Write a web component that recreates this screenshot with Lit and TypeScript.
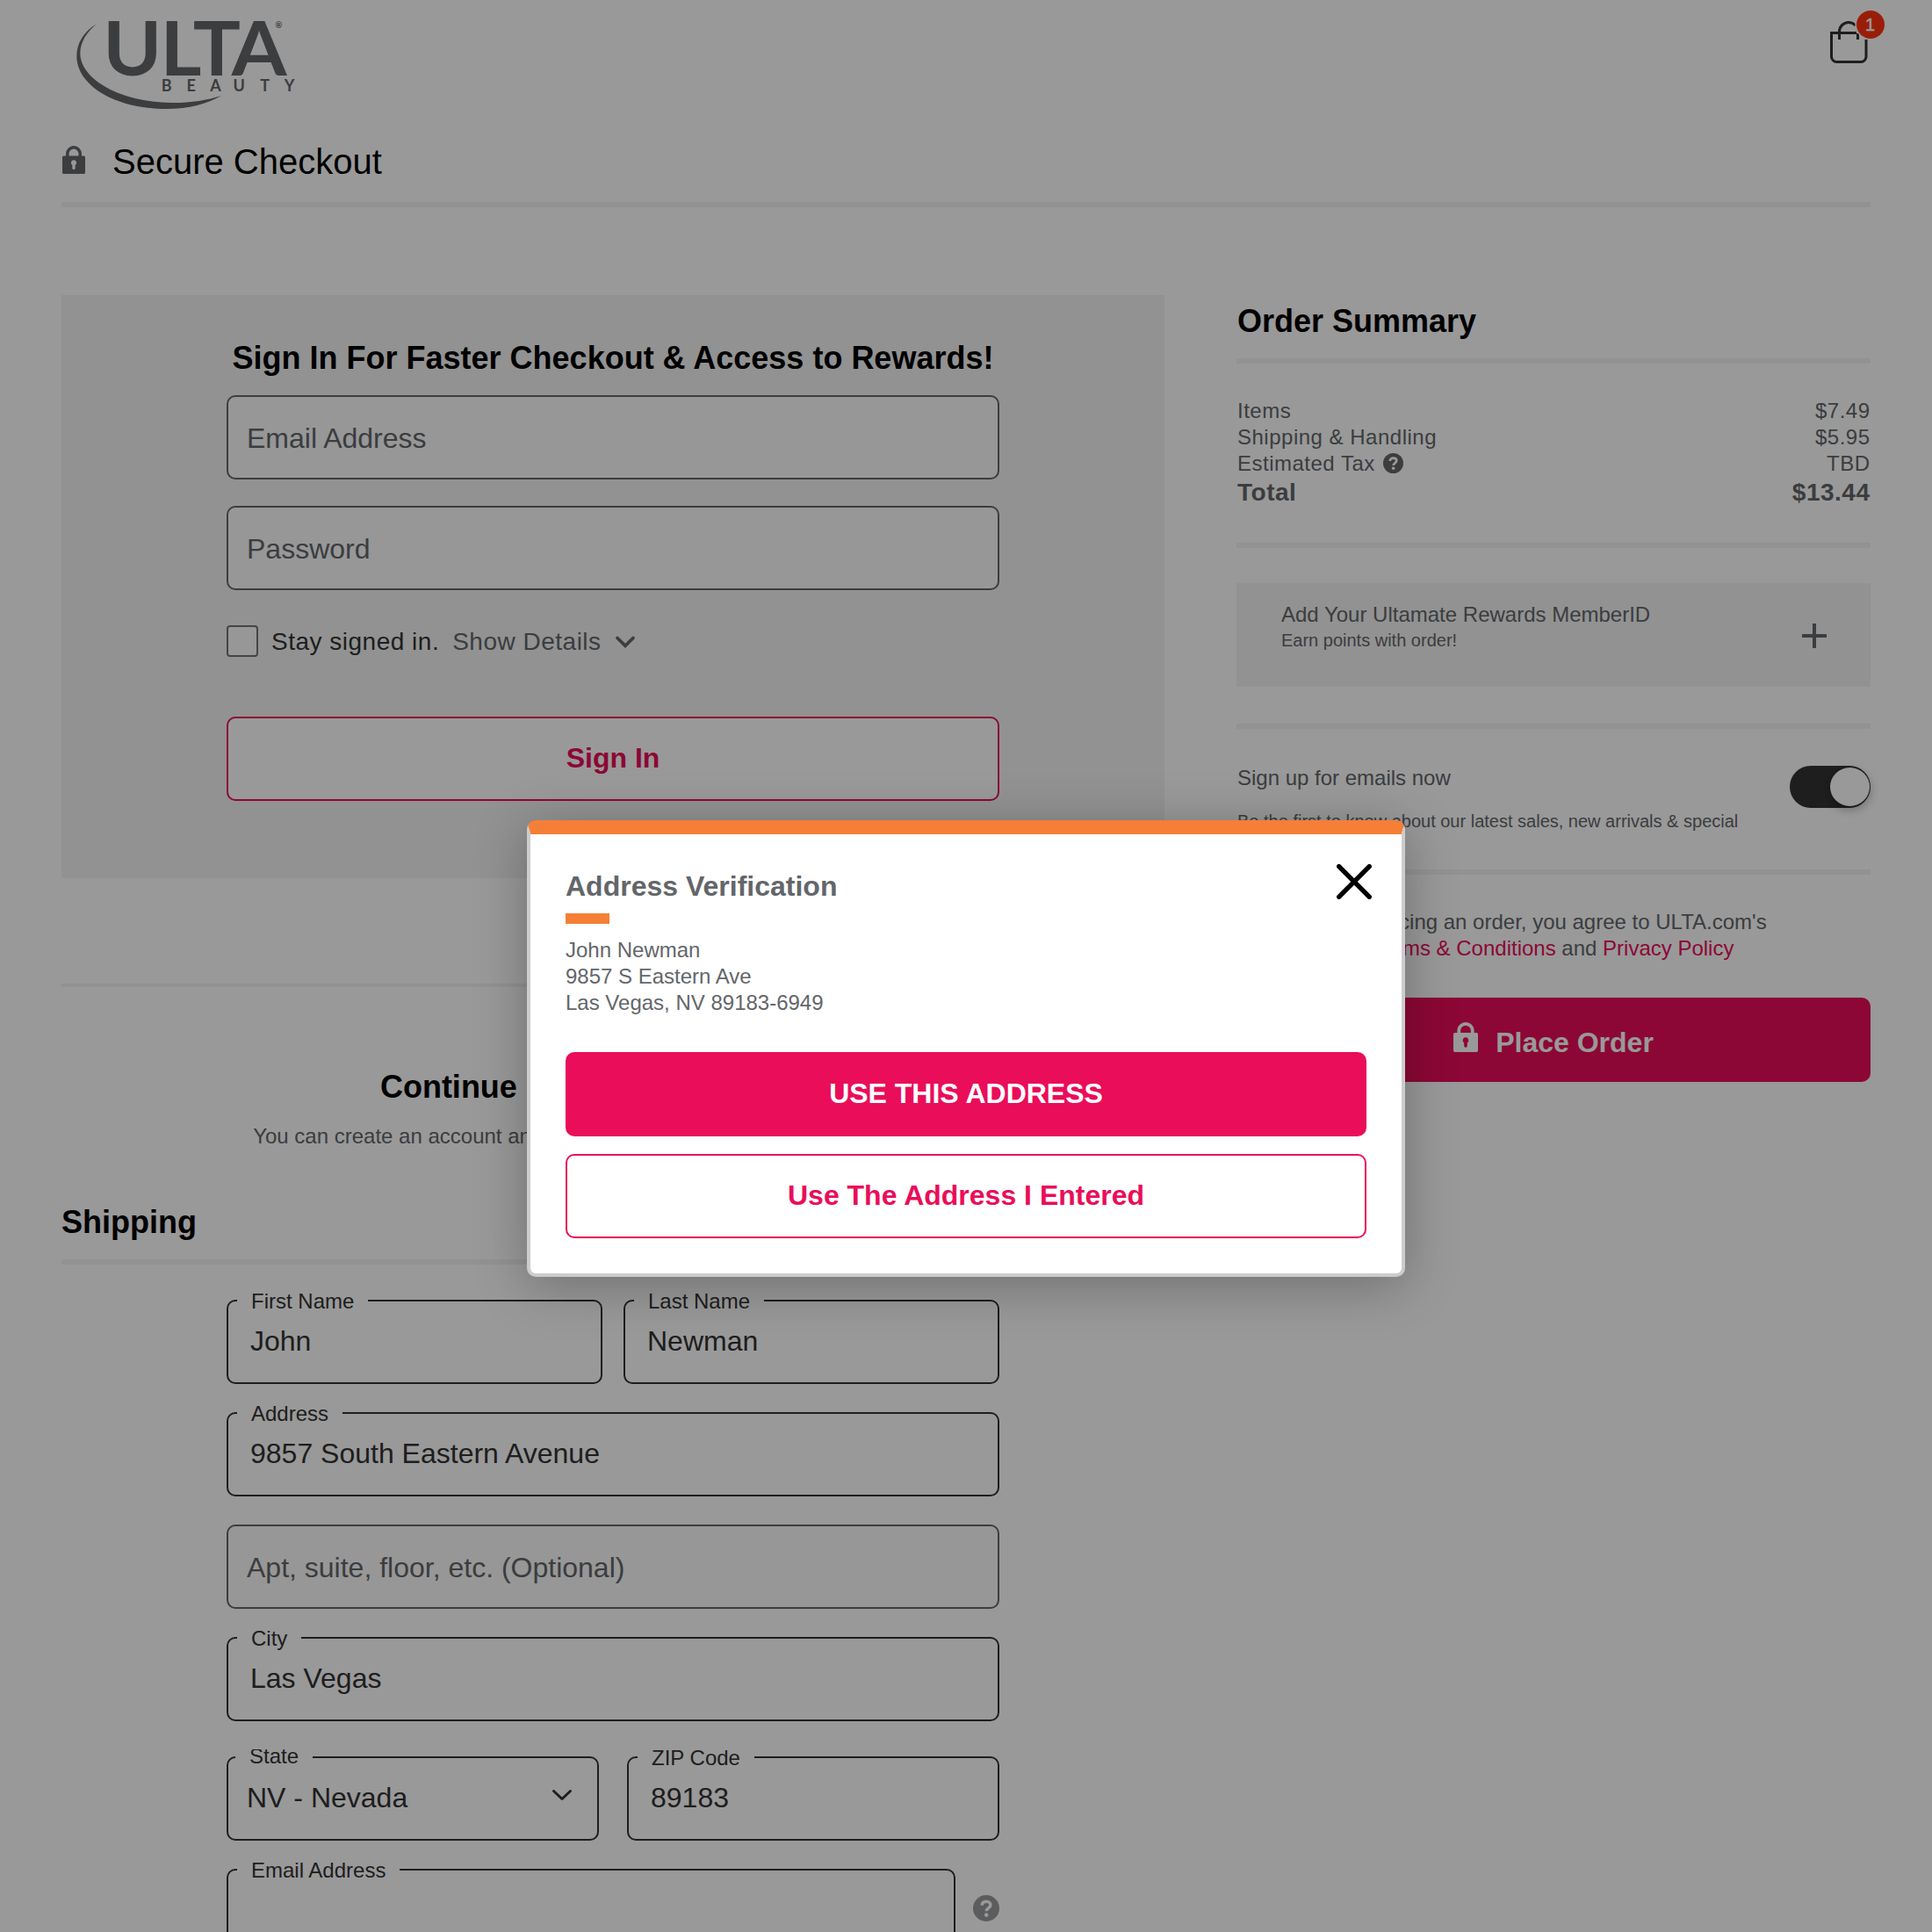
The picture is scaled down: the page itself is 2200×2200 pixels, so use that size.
import { LitElement, html, css, nothing } from "lit";
import { customElement, property } from "lit/decorators.js";
import { classMap } from "lit/directives/class-map.js";

const lockIcon = html`<svg class="lock" viewBox="0 0 26 32" preserveAspectRatio="none" aria-hidden="true">
  <path d="M5.8 13V9a7.2 7.2 0 0 1 14.4 0v4" fill="none" stroke="currentColor" stroke-width="3.5" />
  <path fill="currentColor" fill-rule="evenodd" d="M1.6 11.4h22.8a1.6 1.6 0 0 1 1.6 1.6v17.4a1.6 1.6 0 0 1-1.6 1.6H1.6A1.6 1.6 0 0 1 0 30.4V13a1.6 1.6 0 0 1 1.6-1.6ZM13 16.3a3.1 3.1 0 0 0-1.7 5.7v3.4a1.7 1.7 0 0 0 3.4 0V22A3.1 3.1 0 0 0 13 16.3Z" />
</svg>`;

const helpIcon = html`<svg class="help" viewBox="0 0 30 30" aria-hidden="true">
  <circle cx="15" cy="15" r="15" fill="currentColor" />
  <path d="M10.2 11.8c0-2.9 2.1-4.6 4.9-4.6s4.8 1.6 4.8 4c0 3.500-4.600 3.500-4.600 7.100" fill="none" stroke="#fff" stroke-width="3.6" />
  <circle cx="15.2" cy="22.6" r="2.3" fill="#fff" />
</svg>`;

@customElement("text-field")
export class TextField extends LitElement {
  @property() label = "";
  @property() value = "";
  @property() placeholder = "";
  @property({ type: Boolean }) select = false;

  static styles = css`
    :host { display: block; }
    .box {
      position: relative;
      box-sizing: border-box;
      height: 96px;
      border: 2px solid #333;
      border-radius: 10px;
      padding: 27px 24px 0 25px;
      display: flex;
      justify-content: space-between;
      align-items: flex-start;
      font: 32px/36px "Liberation Sans", Arial, sans-serif;
      color: #333;
      background: #fff;
    }
    .box.empty {
      border-color: #63666a;
      color: #63666a;
      background: #fcfcfc;
      padding: 29px 20px 0 21px;
    }
    .box.select { padding: 27px 28px 0 21px; }
    .label {
      position: absolute;
      top: -14px;
      left: 10px;
      padding: 0 16px;
      background: #fff;
      font-size: 24px;
      line-height: 27px;
      white-space: nowrap;
    }
    .select .label { top: -10px; left: 8px; height: 20px; overflow: hidden; }
    .select .label span { display: block; margin-top: -6px; }
    .chevron { width: 24px; height: 16px; margin-top: 8px; }
  `;

  render() {
    const empty = !this.label;
    return html`<div class=${classMap({ box: true, empty, select: this.select })}>
      ${this.label ? html`<div class="label"><span>${this.label}</span></div>` : nothing}
      <span>${empty ? this.placeholder : this.value}</span>
      ${this.select
        ? html`<svg class="chevron" viewBox="0 0 24 16"><path d="M2.5 2.5 12 11.5 21.5 2.5" fill="none" stroke="currentColor" stroke-width="3" stroke-linecap="round" stroke-linejoin="round" /></svg>`
        : nothing}
    </div>`;
  }
}

@customElement("address-dialog")
export class AddressDialog extends LitElement {
  static styles = css`
    :host {
      display: block;
      box-sizing: border-box;
      width: 1000px;
      height: 520px;
      padding: 41px 40px 0;
      border: 4px solid #ccc;
      border-top: 16px solid #f57f36;
      border-radius: 10px;
      background: #fff;
      box-shadow: 0 10px 60px rgba(0, 0, 0, 0.27);
      color: #63666a;
      font: 24px/30px "Liberation Sans", Arial, sans-serif;
    }
    h2 { margin: 0; font-size: 32px; line-height: 36px; }
    .accent { width: 50px; height: 12px; margin-top: 13px; background: #f57f36; }
    .address { margin: 15px 0 41px; }
    .button {
      box-sizing: border-box;
      height: 96px;
      padding-top: 27px;
      border: 2px solid #ea0d59;
      border-radius: 10px;
      text-align: center;
      font-size: 32px;
      line-height: 36px;
      font-weight: 700;
      color: #ea0d59;
    }
    .button + .button { margin-top: 20px; }
    .primary { background: #ea0d59; color: #fff; }
    .close { position: absolute; top: 34px; right: 34px; width: 40px; height: 40px; }
  `;

  render() {
    return html`
      <h2>Address Verification</h2>
      <div class="accent"></div>
      <div class="address">John Newman<br />9857 S Eastern Ave<br />Las Vegas, NV 89183-6949</div>
      <div class="button primary">USE THIS ADDRESS</div>
      <div class="button">Use The Address I Entered</div>
      <svg class="close" viewBox="0 0 40 40"><path d="M2.7 2.7 37.3 37.3M37.3 2.7 2.7 37.3" stroke="#000" stroke-width="5.4" stroke-linecap="round" /></svg>
    `;
  }
}

@customElement("order-summary")
export class OrderSummary extends LitElement {
  static styles = css`
    :host {
      display: block;
      padding-top: 9px;
      color: #63666a;
      font: 24px/27px "Liberation Sans", Arial, sans-serif;
    }
    h2 { margin: 0 0 22px; padding-left: 1px; font-size: 36px; line-height: 41px; color: #000; }
    .rule { height: 6px; background: #f3f3f3; }
    .costs { margin: 39px 0 42px; letter-spacing: 0.5px; padding-left: 1px; }
    .cost { display: flex; justify-content: space-between; height: 28px; padding: 1px 0; }
    .cost .name { display: flex; }
    .help { width: 23px; height: 23px; margin: 2px 0 0 9px; }
    .amount { margin-right: 0.5px; }
    .total { font-size: 28px; line-height: 31px; font-weight: 700; height: 31px; padding: 2px 0 0; }
    .rewards {
      display: flex;
      justify-content: space-between;
      box-sizing: border-box;
      height: 118px;
      margin: 40px 0 42px;
      padding: 22px 50px 0 51px;
      background: #f3f3f3;
    }
    .small { font-size: 20px; line-height: 22px; }
    .rewards .small { margin-top: 5px; }
    .plus { width: 28px; height: 28px; margin-top: 24px; }
    .emails { display: flex; justify-content: space-between; margin-top: 42px; padding-left: 1px; }
    .emails .small { margin: 24px 0 19px; line-height: 24px; }
    .toggle {
      box-sizing: border-box;
      width: 92px;
      height: 48px;
      padding: 2px 1px 2px 2px;
      border-radius: 24px;
      background: #333;
      display: flex;
      justify-content: flex-end;
    }
    .knob { width: 45px; height: 44px; border-radius: 50%; background: #fff; box-shadow: 0 4px 12px rgba(0, 0, 0, 0.3); }
    .terms { margin: 39px 0 41px; text-align: center; line-height: 30px; }
    .link { color: #ea0d59; }
    .order {
      display: flex;
      justify-content: center;
      align-items: flex-start;
      gap: 20px;
      box-sizing: border-box;
      height: 96px;
      padding-top: 28px;
      border-radius: 10px;
      background: #ea0d59;
      color: #fff;
      font-size: 32px;
      line-height: 36px;
      font-weight: 700;
    }
    .order span { margin-top: 5px; }
    .lock { width: 28px; height: 34px; }
  `;

  render() {
    return html`
      <h2>Order Summary</h2>
      <div class="rule"></div>
      <div class="costs">
        <div class="cost"><span class="name">Items</span><span class="amount">$7.49</span></div>
        <div class="cost"><span class="name">Shipping &amp; Handling</span><span class="amount">$5.95</span></div>
        <div class="cost"><span class="name">Estimated Tax ${helpIcon}</span><span class="amount">TBD</span></div>
        <div class="cost total"><span class="name">Total</span><span class="amount">$13.44</span></div>
      </div>
      <div class="rule"></div>
      <div class="rewards">
        <div>
          <div>Add Your Ultamate Rewards MemberID</div>
          <div class="small">Earn points with order!</div>
        </div>
        <svg class="plus" viewBox="0 0 28 28"><path d="M14 0v28M0 14h28" stroke="currentColor" stroke-width="4" /></svg>
      </div>
      <div class="rule"></div>
      <div class="emails">
        <div>
          <div>Sign up for emails now</div>
          <div class="small">Be the first to know about our latest sales, new arrivals &amp; special<br />offers!</div>
        </div>
        <div class="toggle"><div class="knob"></div></div>
      </div>
      <div class="rule"></div>
      <div class="terms">By placing an order, you agree to ULTA.com's<br /><span class="link">Terms &amp; Conditions</span> and <span class="link">Privacy Policy</span></div>
      <div class="order">${lockIcon}<span>Place Order</span></div>
    `;
  }
}

@customElement("app-root")
export class AppRoot extends LitElement {
  static styles = css`
    :host {
      display: block;
      position: relative;
      width: 2200px;
      height: 2200px;
      overflow: hidden;
      background: #fff;
      color: #63666a;
      font: 24px/27px "Liberation Sans", Arial, sans-serif;
    }
    .top { display: flex; justify-content: space-between; height: 130px; padding: 0 40px 0 70px; }
    .logo { width: 280px; height: 130px; }
    .bag { width: 100px; height: 80px; }
    .brand { font-family: Lato, sans-serif; font-weight: 700; }
    .title { display: flex; gap: 31px; height: 71px; padding: 29px 0 0 1px; margin: 0 70px; border-bottom: 6px solid #f3f3f3; }
    .title h1 { margin: 3px 0 0; font-size: 40px; line-height: 44px; font-weight: 400; color: #000; }
    .title .lock { width: 26px; height: 32px; margin-top: 7px; }
    .columns { display: grid; grid-template-columns: 1256px 722px; column-gap: 82px; padding: 100px 70px 0; }
    h2 { margin: 0; font-size: 36px; line-height: 41px; color: #000; }
    .signin { box-sizing: border-box; height: 664px; padding: 51px 188px 0; background: #f3f3f3; }
    .signin h2 { text-align: center; white-space: nowrap; margin-bottom: 22px; }
    .signin text-field + text-field { margin-top: 30px; }
    .stay { display: flex; margin: 40px 0 68px; font-size: 28px; line-height: 31px; letter-spacing: 0.5px; height: 36px; color: #333; }
    .check { box-sizing: border-box; width: 36px; height: 36px; border: 2px solid #707376; border-radius: 4px; background: #fcfcfc; margin-right: 15px; }
    .stay span { margin-top: 3px; }
    .stay .details { margin-left: 15px; color: #63666a; }
    .stay .chevron { width: 24px; height: 16px; margin: 11px 0 0 15px; color: #63666a; }
    .outline {
      box-sizing: border-box;
      height: 96px;
      padding-top: 27px;
      border: 2px solid #ea0d59;
      border-radius: 10px;
      background: #fff;
      text-align: center;
      font-size: 32px;
      line-height: 36px;
      font-weight: 700;
      color: #ea0d59;
    }
    .thin { height: 4px; margin: 120px 0 93px; background: #f3f3f3; }
    .guest { text-align: center; }
    .guest h2 { word-spacing: 1.500px; padding-left: 4px; }
    .guest p { margin: 22px 0 63px; }
    .shipping { padding: 1px 0 22px; border-bottom: 6px solid #f3f3f3; }
    .form { display: grid; gap: 32px; padding: 40px 188px 0; }
    .names { display: grid; grid-template-columns: 1fr 1fr; column-gap: 24px; }
    .region { display: grid; grid-template-columns: 1fr 1fr; column-gap: 32px; margin-top: 8px; }
    .email { display: grid; grid-template-columns: 1fr 30px; column-gap: 20px; align-items: start; }
    .email .help { width: 30px; height: 30px; margin-top: 30px; color: #96999c; }
    .shade { position: absolute; inset: 0; background: rgba(0, 0, 0, 0.4); }
    .dialog { position: absolute; left: 600px; top: 934px; }
  `;

  render() {
    return html`
      <div class="top">
        <svg class="logo" viewBox="70 0 280 130">
          <path fill="#63666a" d="M110 27.500C96 35 87.300 49 87.300 64c0 32 41.700 60 102.700 60 25 0 46-6 62-15-17 5.500-36 8.300-57 8C136 116 91.800 90 91.300 61c0-13 7.700-25 18.700-33.500Z" />
          <g class="brand" fill="#63666a">
            <text transform="scale(1.05 1)" x="111.6 173.8 209.3 251.3" y="86.2" font-size="86">ULTA</text>
            <text x="183.7 212.4 239.3 265.6 296.2 323.7" y="104" font-size="18">BEAUTY</text>
            <text x="313.5" y="31.5" font-size="9.5">®</text>
          </g>
        </svg>
        <svg class="bag" viewBox="2060 0 100 80">
          <path d="M2114 37.5H2085.5V64.5a6 6 0 0 0 6 6h27.5a6 6 0 0 0 6-6V45" fill="none" stroke="#333" stroke-width="3" />
          <path d="M2094.5 45V36a10.500 10.500 0 0 1 10.500-10.500c3.500 0 6 1.500 8 3.500M2115.500 38v7" fill="none" stroke="#333" stroke-width="3" />
          <circle cx="2130" cy="28" r="17.5" fill="#fff" />
          <circle cx="2130" cy="28" r="16" fill="#ff3211" />
          <text x="2129.5" y="35" font-size="20" text-anchor="middle" fill="#fff" stroke="#fff" stroke-width="0.5">1</text>
        </svg>
      </div>
      <div class="title">${lockIcon}<h1>Secure Checkout</h1></div>

      <div class="columns">
        <div>
          <div class="signin">
            <h2>Sign In For Faster Checkout &amp; Access to Rewards!</h2>
            <text-field placeholder="Email Address"></text-field>
            <text-field placeholder="Password"></text-field>
            <div class="stay">
              <div class="check"></div>
              <span>Stay signed in.</span>
              <span class="details">Show Details</span>
              <svg class="chevron" viewBox="0 0 24 16"><path d="M3 3.5 12 12.300 21 3.500" fill="none" stroke="currentColor" stroke-width="3.7" stroke-linecap="round" /></svg>
            </div>
            <div class="outline">Sign In</div>
          </div>
          <div class="thin"></div>
          <div class="guest">
            <h2>Continue With Guest Checkout</h2>
            <p>You can create an account and start earning points after your order is placed.</p>
          </div>
          <h2 class="shipping">Shipping</h2>
          <div class="form">
            <div class="names">
              <text-field label="First Name" value="John"></text-field>
              <text-field label="Last Name" value="Newman"></text-field>
            </div>
            <text-field label="Address" value="9857 South Eastern Avenue"></text-field>
            <text-field placeholder="Apt, suite, floor, etc. (Optional)"></text-field>
            <text-field label="City" value="Las Vegas"></text-field>
            <div class="region">
              <text-field select label="State" value="NV - Nevada"></text-field>
              <text-field label="ZIP Code" value="89183"></text-field>
            </div>
            <div class="email">
              <text-field label="Email Address"></text-field>
              ${helpIcon}
            </div>
          </div>
        </div>
        <order-summary></order-summary>
      </div>

      <div class="shade"></div>
      <address-dialog class="dialog"></address-dialog>
    `;
  }
}
